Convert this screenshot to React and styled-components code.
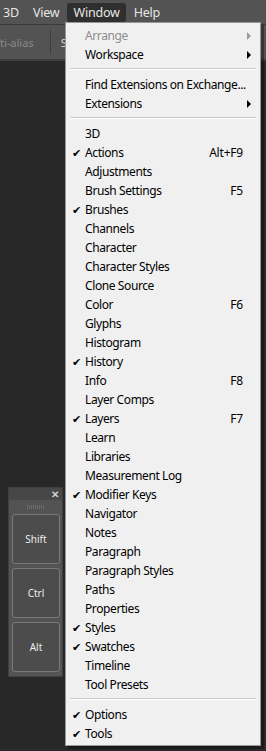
import React from "react";
import styled, { createGlobalStyle } from "styled-components";

const Global = createGlobalStyle`
  html, body { margin: 0; padding: 0; background: #282828; }
  body { font-family: "Noto Sans", "Open Sans", sans-serif; overflow: hidden; }
  #root { width: 266px; height: 751px; position: relative; }
`;

const MenuBar = styled.div`
  height: 25px;
  background: #535353;
  display: flex;
  align-items: center;
  padding-left: 0;
  border-bottom: 1px solid #3a3a3a;
  box-sizing: border-box;
`;

const BarItem = styled.div`
  color: #e6e6e6;
  font-size: 12.5px;
  letter-spacing: -0.2px;
  height: 19px;
  line-height: 19px;
  padding: 0 6px;
  border-radius: 3px;
  background: ${(p) => (p.$active ? "#2f2f2f" : "transparent")};
  margin-top: 1px;
  margin-right: 2px;
  &:first-child { margin-left: -3px; }
`;

const OptionsBar = styled.div`
  height: 36px;
  background: #535353;
  display: flex;
  align-items: center;
  border-bottom: 2px solid #3d3d3d;
  box-sizing: border-box;
`;

const OptText = styled.span`
  color: ${(p) => p.$color || "#8a8a8a"};
  font-size: 11px;
  white-space: nowrap;
`;

const Divider = styled.div`
  width: 1px;
  height: 24px;
  background: #3e3e3e;
  margin: 0 10px 0 16px;
`;

const Workspace = styled.div`
  position: relative;
  height: 690px;
  padding: 426px 0 0 8px;
  box-sizing: border-box;
`;

const Panel = styled.div`
  width: 55px;
  height: 190px;
  background: #535353;
  border: 1px solid #3f3f3f;
  box-sizing: border-box;
  display: flex;
  flex-direction: column;
`;

const PanelHead = styled.div`
  height: 12px;
  background: #474747;
  display: flex;
  justify-content: flex-end;
  align-items: center;
  padding-right: 3px;
  color: #d0d0d0;
  font-size: 10px;
  font-weight: bold;
  line-height: 1;
`;

const Grip = styled.div`
  height: 14px;
  display: flex;
  justify-content: center;
  align-items: center;
  gap: 1px;
`;

const GripDot = styled.div`
  width: 1px;
  height: 4px;
  background: #6c6c6c;
`;

const Keys = styled.div`
  display: flex;
  flex-direction: column;
  gap: 4px;
  padding: 0 2px 0 3px;
`;

const Key = styled.div`
  height: 50px;
  border: 1px solid #7a7a7a;
  border-radius: 3px;
  background: #4c4c4c;
  color: #ececec;
  font-size: 10px;
  display: flex;
  align-items: center;
  justify-content: center;
  box-sizing: border-box;
`;

const Menu = styled.div`
  position: absolute;
  left: 65px;
  top: 22px;
  width: 196px;
  background: #f0f0f0;
  border: 1px solid #979797;
  box-shadow: 3px 3px 0 rgba(0, 0, 0, 0.35);
  padding: 3px 2px 2px 2px;
  box-sizing: border-box;
`;

const Row = styled.div`
  height: 19px;
  display: flex;
  align-items: center;
  font-size: 12px;
  color: ${(p) => (p.$disabled ? "#8d8d8d" : "#000")};
  position: relative;
`;

const Check = styled.span`
  width: 17px;
  padding-left: 4px;
  font-size: 11px;
  box-sizing: border-box;
`;

const Label = styled.span`
  flex: 1;
  white-space: nowrap;
  letter-spacing: -0.4px;
`;

const Shortcut = styled.span`
  margin-right: 15px;
  white-space: nowrap;
  letter-spacing: -0.2px;
`;

const Arrow = styled.span`
  position: absolute;
  right: 7px;
  top: 6px;
  width: 0;
  height: 0;
  border-top: 4px solid transparent;
  border-bottom: 4px solid transparent;
  border-left: 4px solid ${(p) => (p.$disabled ? "#9a9a9a" : "#000")};
`;

const Sep = styled.div`
  height: 1px;
  background: #c8c8c8;
  margin: 4px 2px 5px 2px;
  border-bottom: 1px solid #fff;
`;

const panels = [
  ["3D"],
  ["Actions", "Alt+F9", true],
  ["Adjustments"],
  ["Brush Settings", "F5"],
  ["Brushes", "", true],
  ["Channels"],
  ["Character"],
  ["Character Styles"],
  ["Clone Source"],
  ["Color", "F6"],
  ["Glyphs"],
  ["Histogram"],
  ["History", "", true],
  ["Info", "F8"],
  ["Layer Comps"],
  ["Layers", "F7", true],
  ["Learn"],
  ["Libraries"],
  ["Measurement Log"],
  ["Modifier Keys", "", true],
  ["Navigator"],
  ["Notes"],
  ["Paragraph"],
  ["Paragraph Styles"],
  ["Paths"],
  ["Properties"],
  ["Styles", "", true],
  ["Swatches", "", true],
  ["Timeline"],
  ["Tool Presets"],
];

const Item = ({ label, shortcut, checked, sub, disabled }) => (
  <Row $disabled={disabled}>
    <Check>{checked ? "✔" : ""}</Check>
    <Label>{label}</Label>
    {shortcut && <Shortcut>{shortcut}</Shortcut>}
    {sub && <Arrow $disabled={disabled} />}
  </Row>
);

export default function App() {
  return (
    <>
      <Global />
      <MenuBar>
        <BarItem>3D</BarItem>
        <BarItem>View</BarItem>
        <BarItem $active>Window</BarItem>
        <BarItem>Help</BarItem>
      </MenuBar>
      <OptionsBar>
        <OptText>ti-alias</OptText>
        <Divider />
        <OptText $color="#d8d8d8">Sty</OptText>
      </OptionsBar>
      <Workspace>
        <Panel>
          <PanelHead>✕</PanelHead>
          <Grip>
            {Array.from({ length: 9 }).map((_, i) => (
              <GripDot key={i} />
            ))}
          </Grip>
          <Keys>
            <Key>Shift</Key>
            <Key>Ctrl</Key>
            <Key>Alt</Key>
          </Keys>
        </Panel>
      </Workspace>
      <Menu>
        <Item label="Arrange" sub disabled />
        <Item label="Workspace" sub />
        <Sep />
        <Item label="Find Extensions on Exchange..." />
        <Item label="Extensions" sub />
        <Sep />
        {panels.map(([label, shortcut, checked]) => (
          <Item key={label} label={label} shortcut={shortcut} checked={checked} />
        ))}
        <Sep />
        <Item label="Options" checked />
        <Item label="Tools" checked />
      </Menu>
    </>
  );
}
